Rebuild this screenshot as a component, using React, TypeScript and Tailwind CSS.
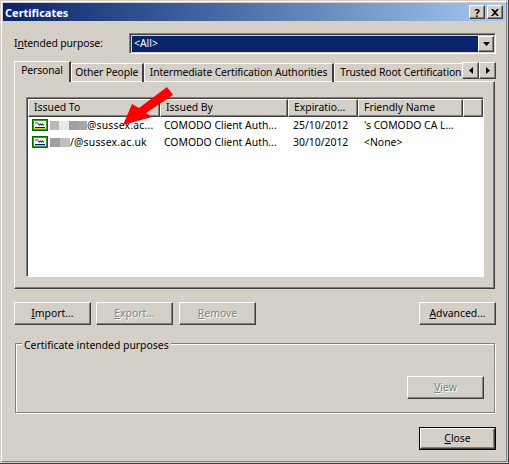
const raised = 'border-t border-l border-t-white border-l-white border-r border-b border-r-[#404040] border-b-[#404040] shadow-[inset_-1px_-1px_0_#808080]';
const disabledText = 'text-[#808080] [text-shadow:1px_1px_0_#fff]';

const CertIcon = () => (
  <svg width="16" height="12" viewBox="0 0 16 12" className="shrink-0">
    <rect x="0" y="0" width="16" height="12" fill="#006a00" />
    <rect x="1" y="1" width="14" height="10" fill="#30a030" />
    <rect x="2" y="2" width="12" height="8" fill="#f4f4e0" />
    <rect x="3" y="3" width="3" height="2" fill="#a0a0a0" />
    <path d="M6 5h1v1h1V5h1v1h1V5h1v1h1" stroke="#101080" fill="none" strokeWidth="1" />
    <rect x="3" y="8" width="10" height="1" fill="#101080" />
    <rect x="2" y="9" width="12" height="1" fill="#e0d040" />
  </svg>
);

const DialogButton = ({ children, disabled, className = '' }: { children: React.ReactNode; disabled?: boolean; className?: string }) => (
  <button className={`w-[77px] h-[23px] pb-[1px] flex items-center justify-center ${raised} ${disabled ? disabledText : 'text-black'} ${className}`}>
    {children}
  </button>
);

const Blur = ({ width, tones }: { width: string; tones: string[] }) => (
  <span className={`flex h-[9px] blur-[0.6px] ${width}`}>
    {tones.map((t, i) => (
      <span key={i} className={`flex-1 ${t}`} />
    ))}
  </span>
);

const Row = ({ blur, mail, issuer, date, name }: { blur: React.ReactNode; mail: string; issuer: string; date: string; name: string }) => (
  <div className="flex h-[17px] items-center pb-[1px]">
    <div className="w-[132px] pl-[4px] flex items-center">
      <CertIcon />
      <span className="ml-[2px] flex items-center whitespace-nowrap tracking-[0.2px]">
        {blur}
        {mail}
      </span>
    </div>
    <div className="w-[128px] pl-[4px] whitespace-nowrap">{issuer}</div>
    <div className="w-[70px] pl-[5px] whitespace-nowrap">{date}</div>
    <div className="w-[105px] pl-[6px] whitespace-nowrap">{name}</div>
  </div>
);

const Column = ({ label, width }: { label: string; width: string }) => (
  <div className={`h-[18px] flex items-center pl-[5px] pb-[2px] ${width} ${raised}`}>{label}</div>
);

export default function App() {
  return (
    <div className="relative w-[509px] h-[464px] bg-[#d4d0c8] text-black text-[10.4px] leading-[13px] font-['Noto_Sans','Open_Sans',sans-serif] overflow-hidden p-[1px] border-r border-b border-r-[#404040] border-b-[#404040]">
      <div className="h-full border-t border-l border-t-white border-l-white border-r border-b border-r-[#808080] border-b-[#808080] p-[1px]">
        {/* Title bar */}
        <div className="h-[18px] flex items-center justify-between pl-[2px] pr-[2px] bg-gradient-to-r from-[#0a246a] to-[#a6caf0]">
          <span className="font-bold text-white text-[11px] pt-[1px]">Certificates</span>
          <div className="flex gap-[2px]">
            <div className={`w-[16px] h-[14px] bg-[#d4d0c8] flex items-center justify-center font-bold text-[11px] ${raised}`}>?</div>
            <div className={`w-[16px] h-[14px] bg-[#d4d0c8] flex items-center justify-center ${raised}`}>
              <svg width="8" height="7" viewBox="0 0 8 7">
                <path d="M0 0h2l2 2 2-2h2L5 3.5 8 7H6L4 5 2 7H0l3-3.5z" fill="#000" />
              </svg>
            </div>
          </div>
        </div>

        <div className="pl-[11px] pr-[9px]">
          {/* Intended purpose */}
          <div className="flex items-center mt-[12px] h-[20px]">
            <span className="w-[115px] tracking-[-0.12px] pt-[1px]">
              I<span className="underline">n</span>tended purpose:
            </span>
            <div className="flex-1 h-[21px] flex border-t border-l border-t-[#808080] border-l-[#808080] border-r border-b border-r-white border-b-white shadow-[inset_1px_1px_0_#404040] pt-[2px] pl-[2px] pr-[1px] pb-[1px]">
              <div className="flex-1 bg-[#0a246a] text-white flex items-center pl-[2px]">&lt;All&gt;</div>
              <div className={`w-[16px] flex items-center justify-center bg-[#d4d0c8] ${raised}`}>
                <svg width="7" height="4" viewBox="0 0 7 4">
                  <path d="M0 0h7L3.5 4z" fill="#000" />
                </svg>
              </div>
            </div>
          </div>

          {/* Tabs */}
          <div className="flex items-end h-[21px] mt-[8px] relative z-10 tracking-[-0.13px]">
            <div className="w-[57px] h-[21px] pb-[3px] flex items-center justify-center bg-[#d4d0c8] border-t border-l border-t-white border-l-white border-r-2 border-r-[#404040]">Personal</div>
            <div className="w-[73px] h-[19px] pb-[1px] flex items-center justify-center border-t border-l border-t-white border-l-white border-r-2 border-r-[#404040]">Other People</div>
            <div className="w-[191px] h-[19px] pb-[1px] flex items-center justify-center border-t border-l border-t-white border-l-white border-r-2 border-r-[#404040] whitespace-nowrap">Intermediate Certification Authorities</div>
            <div className="w-[128px] h-[19px] pb-[1px] pl-[5px] flex items-center border-t border-l border-t-white border-l-white overflow-hidden whitespace-nowrap">Trusted Root Certification Authorities</div>
            <div className="flex self-start mt-[1px]">
              <div className={`w-[17px] h-[17px] flex items-center justify-center ${raised}`}>
                <svg width="4" height="7" viewBox="0 0 4 7"><path d="M4 0v7L0 3.5z" fill="#000" /></svg>
              </div>
              <div className={`w-[17px] h-[17px] flex items-center justify-center ${raised}`}>
                <svg width="4" height="7" viewBox="0 0 4 7"><path d="M0 0v7l4-3.5z" fill="#000" /></svg>
              </div>
            </div>
          </div>

          {/* Tab panel */}
          <div className={`h-[208px] -mt-[1px] w-[481px] pt-[15px] pl-[11px] ${raised}`}>
            <div className="w-[458px] h-[180px] bg-white border-t border-l border-t-[#808080] border-l-[#808080] border-r border-b border-r-white border-b-white shadow-[inset_1px_1px_0_#404040] pt-[1px] pl-[1px]">
              <div className="flex bg-[#d4d0c8]">
                <Column label="Issued To" width="w-[132px]" />
                <Column label="Issued By" width="w-[128px]" />
                <Column label="Expiratio..." width="w-[70px]" />
                <Column label="Friendly Name" width="w-[105px]" />
                <div className={`flex-1 h-[18px] ${raised}`} />
              </div>
              <Row
                blur={<Blur width="w-[37px]" tones={['bg-[#b8b8b8]', 'bg-[#e8e8e8]', 'bg-[#a0a0a0]', 'bg-[#a8a8a8]']} />}
                mail="@sussex.ac..."
                issuer="COMODO Client Auth..."
                date="25/10/2012"
                name="'s COMODO CA L..."
              />
              <Row
                blur={<Blur width="w-[20px]" tones={['bg-[#a0a0a0]', 'bg-[#c0c0c0]']} />}
                mail="/@sussex.ac.uk"
                issuer="COMODO Client Auth..."
                date="30/10/2012"
                name="<None>"
              />
            </div>
          </div>

          {/* Button row */}
          <div className="flex mt-[13px]">
            <DialogButton>
              <span><span className="underline">I</span>mport...</span>
            </DialogButton>
            <DialogButton disabled className="ml-[5px]">
              <span><span className="underline">E</span>xport...</span>
            </DialogButton>
            <DialogButton disabled className="ml-[6px]">
              <span><span className="underline">R</span>emove</span>
            </DialogButton>
            <DialogButton className="ml-auto">
              <span><span className="underline">A</span>dvanced...</span>
            </DialogButton>
          </div>

          {/* Group box */}
          <div className="relative mt-[18px] ml-[1px] w-[480px] h-[70px] border border-[#808080] shadow-[1px_1px_0_#fff,inset_1px_1px_0_#fff] flex items-end justify-end pr-[10px] pb-[13px]">
            <span className="absolute -top-[5px] left-[6px] px-[2px] bg-[#d4d0c8]">Certificate intended purposes</span>
            <DialogButton disabled>
              <span><span className="underline">V</span>iew</span>
            </DialogButton>
          </div>

          {/* Close */}
          <div className="flex justify-end mt-[14px]">
            <button className="w-[77px] h-[23px] border border-black">
              <span className={`flex items-center justify-center h-full pb-[1px] ${raised}`}>
                <span><span className="underline">C</span>lose</span>
              </span>
            </button>
          </div>
        </div>
      </div>

      {/* Red arrow pasted over the list */}
      <svg width="509" height="464" viewBox="0 0 509 464" className="absolute left-0 top-0 pointer-events-none">
        <path d="M123 125L132 104L139 108L167 87L173 95L146 113L152 117z" fill="#fe0000" />
      </svg>
    </div>
  );
}
